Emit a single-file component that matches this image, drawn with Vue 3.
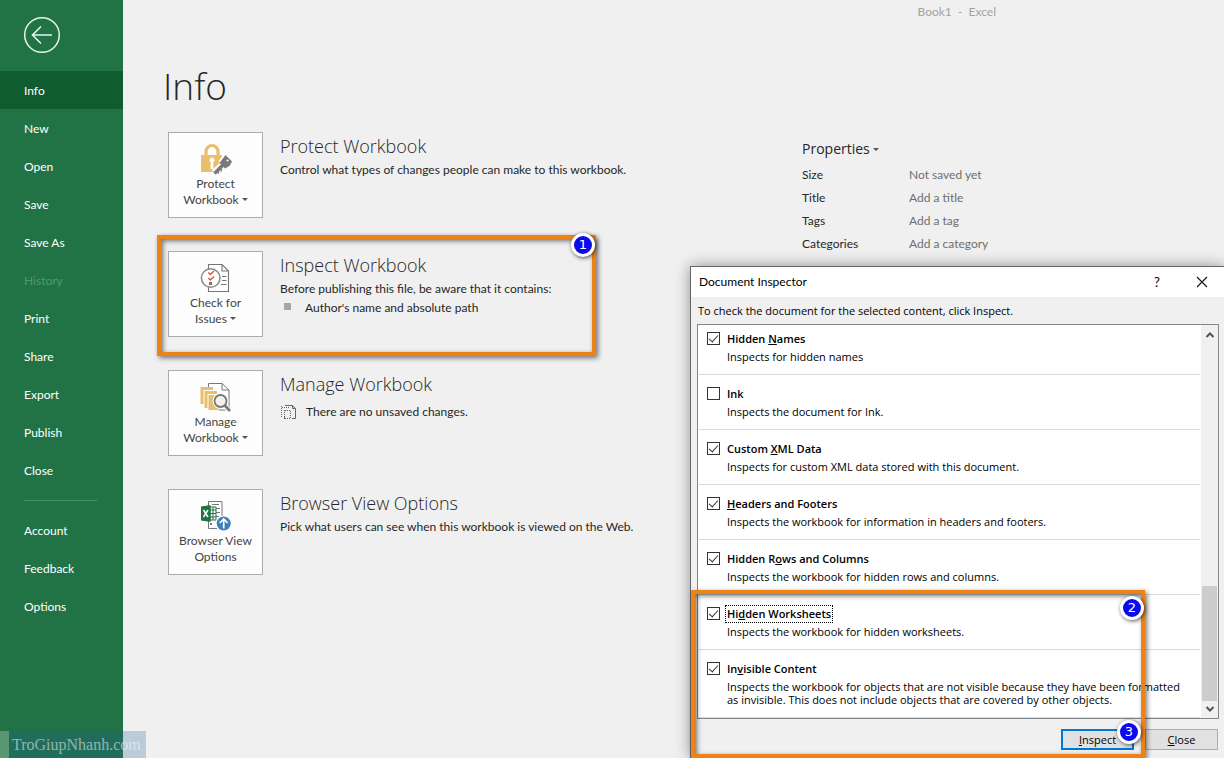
<script setup>
import { ref } from 'vue'

const mainNav = [
  { label: 'Info', active: true },
  { label: 'New' },
  { label: 'Open' },
  { label: 'Save' },
  { label: 'Save As' },
  { label: 'History', disabled: true },
  { label: 'Print' },
  { label: 'Share' },
  { label: 'Export' },
  { label: 'Publish' },
  { label: 'Close' },
]
const footNav = ['Account', 'Feedback', 'Options']

const sections = [
  { id: 'protect', lines: ['Protect', 'Workbook'], menu: true, title: 'Protect Workbook', text: 'Control what types of changes people can make to this workbook.' },
  { id: 'inspect', lines: ['Check for', 'Issues'], menu: true, title: 'Inspect Workbook', text: 'Before publishing this file, be aware that it contains:', bullet: "Author's name and absolute path" },
  { id: 'manage', lines: ['Manage', 'Workbook'], menu: true, title: 'Manage Workbook', note: 'There are no unsaved changes.' },
  { id: 'browser', lines: ['Browser View', 'Options'], menu: false, title: 'Browser View Options', text: 'Pick what users can see when this workbook is viewed on the Web.' },
]

const properties = [
  ['Size', 'Not saved yet'],
  ['Title', 'Add a title'],
  ['Tags', 'Add a tag'],
  ['Categories', 'Add a category'],
]

const checks = ref([
  { pre: 'Hidden ', key: 'N', post: 'ames', on: true, text: ['Inspects for hidden names'] },
  { pre: '', key: '', post: 'Ink', on: false, text: ['Inspects the document for Ink.'] },
  { pre: 'Custom ', key: 'X', post: 'ML Data', on: true, text: ['Inspects for custom XML data stored with this document.'] },
  { pre: '', key: 'H', post: 'eaders and Footers', on: true, text: ['Inspects the workbook for information in headers and footers.'] },
  { pre: 'Hidden R', key: 'o', post: 'ws and Columns', on: true, text: ['Inspects the workbook for hidden rows and columns.'] },
  { pre: 'Hi', key: 'd', post: 'den Worksheets', on: true, focus: true, text: ['Inspects the workbook for hidden worksheets.'] },
  { pre: 'In', key: 'v', post: 'isible Content', on: true, text: ['Inspects the workbook for objects that are not visible because they have been formatted', 'as invisible. This does not include objects that are covered by other objects.'] },
])
</script>

<template>
  <div class="app">
    <aside class="side">
      <button class="back" aria-label="Back">
        <svg width="38" height="38" viewBox="0 0 38 38" fill="none" stroke="#e4f5ea" stroke-width="1.5">
          <circle cx="19" cy="19" r="17.3" />
          <path d="M29 19H10M18 10.5 9.5 19l8.500 8.500" stroke-width="1.6" />
        </svg>
      </button>
      <nav>
        <a v-for="n in mainNav" :key="n.label" href="#" class="nav" :class="{ active: n.active, disabled: n.disabled }">{{ n.label }}</a>
        <hr class="rule" />
        <a v-for="n in footNav" :key="n" href="#" class="nav">{{ n }}</a>
      </nav>
    </aside>

    <main class="main">
      <header class="titlebar">Book1&nbsp; -&nbsp; Excel</header>
      <h1>Info</h1>
      <div class="columns">
        <div class="sections">
          <section v-for="s in sections" :key="s.id" class="section">
            <button class="tile">
              <svg v-if="s.id === 'protect'" width="32" height="32" viewBox="0 0 32 32">
                <path d="M6 13V8.500a6 6 0 0 1 12 0V13" fill="none" stroke="#e8bf6c" stroke-width="3.200" />
                <rect x="1" y="12" width="21" height="17" fill="#e8bf6c" />
                <path d="M12 14.500a2.600 2.600 0 0 1 1.300 4.800V26h-2.600v-6.700a2.600 2.600 0 0 1 1.300-4.800z" fill="#fff" />
                <path d="M14 29.500 23 21" stroke="#fff" stroke-width="6" />
                <path d="M18.500 18 24.500 10.500l8 8-6 7z" fill="#fff" />
                <path d="M25.500 12 32 18.500 29.500 23l-4.500 2.500-5.500-5.500z" fill="#797979" />
                <path d="M14.500 30.500 23.500 21.500" stroke="#797979" stroke-width="3.600" />
                <path d="m17 28.500 2 2M20 25.500l2 2" stroke="#797979" stroke-width="1.500" />
                <circle cx="27.500" cy="17.500" r="1.100" fill="#fff" />
              </svg>
              <svg v-else-if="s.id === 'inspect'" width="32" height="32" viewBox="0 0 32 32" fill="none" stroke="#777" stroke-width="1.100">
                <path d="M8.500 8V2.500H22L28.500 9v20.500h-20V24" />
                <path d="M22 2.500V9h6.500" />
                <path d="M22 14.500h4.500M22 18.500h4.500M21 22.500h5.500" />
                <circle cx="10.700" cy="16" r="9.300" fill="#fff" stroke="#8a8a8a" stroke-width="1.500" />
                <path d="m8.300 10.500 2 2 3.700-3.500M8.300 16l2 2 3.700-3.500" stroke="#d8593a" stroke-width="1.500" />
                <rect x="9.500" y="20.500" width="2" height="2" />
              </svg>
              <svg v-else-if="s.id === 'manage'" width="32" height="32" viewBox="0 0 32 32">
                <path d="M8.500 6V2.500H22L29 9v20H19" fill="#fff" stroke="#777" />
                <path d="M22 2.500V9h7" fill="none" stroke="#777" />
                <path d="M.5 6H13v3H3.500v14h-3zM4.500 10H17v3H7.500v14h-3z" fill="#e8bf6c" />
                <rect x="8.500" y="14" width="12" height="15" fill="#e8bf6c" />
                <circle cx="20.500" cy="20" r="8" fill="#fff" />
                <path d="m25 24.500 5 6" stroke="#fff" stroke-width="5" />
                <circle cx="20.500" cy="20" r="6" fill="#f5f2ec" stroke="#777" stroke-width="1.800" />
                <path d="m24.800 24.500 5.200 5.500" stroke="#777" stroke-width="2.600" />
              </svg>
              <svg v-else width="32" height="32" viewBox="0 0 32 32" fill="none">
                <path d="M8.500 6V1.500h13.500V17M8.500 21v7.500H17" stroke="#777" />
                <path d="M12 4.500h7M16 8.500h4M16 12.500h4M16 16.500h3" stroke="#777" />
                <path d="M11 25v-2" stroke="#777" stroke-width="2" />
                <path d="M10 7h6v13h-6z" fill="#fff" stroke="#217346" />
                <path d="M10 10h6M10 13.500h6M10 17h6M13 7v13" stroke="#217346" />
                <path d="M1 6.500 10.500 5v17L1 20.500z" fill="#217346" />
                <path d="m3.500 10 4.500 7M8 10l-4.500 7" stroke="#fff" stroke-width="1.500" />
                <circle cx="23.700" cy="23.500" r="8" fill="#fff" />
                <circle cx="23.700" cy="23.500" r="7" fill="#3f7fbd" />
                <path d="M23.700 28.500v-9M19.700 23l4-4 4 4" stroke="#fff" stroke-width="1.700" />
              </svg>
              <span>{{ s.lines[0] }}</span>
              <span>{{ s.lines[1] }}<i v-if="s.menu" class="caret"></i></span>
            </button>
            <div class="detail">
              <h2>{{ s.title }}</h2>
              <p v-if="s.text">{{ s.text }}</p>
              <ul v-if="s.bullet"><li>{{ s.bullet }}</li></ul>
              <p v-if="s.note" class="note">
                <svg width="16" height="16" viewBox="0 0 16 16" fill="none" stroke="#666">
                  <path d="M5 1.500h7.500l3 3v10H12M12.500 1.500v3h3" />
                  <path d="M1.500 2v11M2 3.500h8M4 13.500h1M4.500 6v9M5 6.500h6M10.500 7v8M5 14.500h6" stroke-dasharray="1 1" />
                </svg>
                {{ s.note }}
              </p>
            </div>
            <div v-if="s.id === 'inspect'" class="mark mark-one"><b class="pin">1</b></div>
          </section>
        </div>

        <div class="props">
          <button class="props-head">Properties<i class="caret"></i></button>
          <dl>
            <template v-for="p in properties" :key="p[0]">
              <dt>{{ p[0] }}</dt>
              <dd>{{ p[1] }}</dd>
            </template>
          </dl>
        </div>
      </div>
    </main>

    <div class="dialog" role="dialog" aria-labelledby="dlg-title">
      <div class="dlg-bar">
        <span id="dlg-title">Document Inspector</span>
        <button class="help" aria-label="Help">?</button>
        <button class="close" aria-label="Close window">
          <svg width="12" height="12" viewBox="0 0 12 12" stroke="#111" stroke-width="1.100"><path d="m1 1 10 10M11 1 1 11" /></svg>
        </button>
      </div>
      <p class="hint">To check the document for the selected content, click Inspect.</p>
      <div class="list">
        <div class="rows">
          <div v-for="(c, i) in checks" :key="i" class="row">
            <input :id="'check-' + i" v-model="c.on" type="checkbox" />
            <div>
              <label :for="'check-' + i" :class="{ focus: c.focus }">{{ c.pre }}<u>{{ c.key }}</u>{{ c.post }}</label>
              <p><template v-for="(t, j) in c.text" :key="j"><br v-if="j" />{{ t }}</template></p>
            </div>
          </div>
        </div>
        <div class="scroll">
          <svg width="10" height="8" viewBox="0 0 10 8" fill="none" stroke="#555" stroke-width="2"><path d="m1.500 6 3.500-3.500 3.500 3.500" /></svg>
          <div class="thumb"></div>
          <svg width="10" height="8" viewBox="0 0 10 8" fill="none" stroke="#555" stroke-width="2"><path d="m1.500 2 3.500 3.500 3.500-3.500" /></svg>
        </div>
      </div>
      <div class="actions">
        <button class="btn primary"><u>I</u>nspect</button>
        <button class="btn"><u>C</u>lose</button>
      </div>
      <div class="mark mark-two"><b class="pin">2</b><b class="pin low">3</b></div>
    </div>

    <div class="watermark">TroGiupNhanh.com</div>
  </div>
</template>

<style>
body { margin: 0; background: #f0f0f0; }
</style>

<style scoped>
.app {
  position: relative;
  display: flex;
  min-height: 100vh;
  overflow: hidden;
  background: #f0f0f0;
  color: #262626;
  font: 12px/16px Lato, "Open Sans", sans-serif;
}
button { font: inherit; color: inherit; padding: 0; border: 0; background: none; }
p, h1, h2, dl, dd, ul { margin: 0; padding: 0; }

.side { flex: 0 0 123px; background: #217346; }
.back { display: block; margin: 16px 0 17px 23px; height: 38px; }
.nav { display: block; padding: 2px 0 0 24px; line-height: 36px; color: #fff; text-decoration: none; }
.nav.active { background: #0f5c2f; }
.nav.disabled { color: #4d9b70; }
.rule { margin: 11px 26px 10px 24px; border: 0; border-top: 1px solid #4b9069; }

.main { flex: 1; min-width: 0; }
.titlebar { padding: 4px 228px 0 0; text-align: right; color: #a3a3a3; }
h1 { margin: 38px 0 0 40px; font: 300 37px/56px "Open Sans", sans-serif; }
.columns { display: flex; padding: 18px 0 0 45px; }
.sections { flex: 0 0 634px; display: grid; gap: 33px; align-content: start; }
.section { position: relative; display: flex; }
.tile {
  display: flex;
  flex-direction: column;
  align-items: center;
  flex: 0 0 95px;
  box-sizing: border-box;
  height: 86px;
  padding-top: 10px;
  border: 1px solid #ababab;
  background: #fdfdfd;
  color: #444;
}
.tile svg { margin-bottom: 1px; }
.caret { display: inline-block; margin-left: 3px; border: 3px solid transparent; border-top-color: #555; border-bottom: 0; vertical-align: 3px; }
.detail { padding: 1px 0 0 17px; }
h2 { font: 300 18px/26px "Open Sans", sans-serif; margin-bottom: 3px; }
ul { list-style: none; margin-top: 3px; }
li { display: flex; }
li::before { content: ""; width: 7px; height: 7px; margin: 3px 14px 0 4px; background: #a6a6a6; }
.note { display: flex; gap: 10px; margin-top: 7px; }

.props { padding-top: 7px; }
.props-head { display: block; font: 14px/20px "Open Sans", sans-serif; }
dl { display: grid; grid-template-columns: 107px auto; margin-top: 4px; line-height: 23px; }
dd { color: #6e6e6e; }

.mark { position: absolute; border: 4px solid #ee8315; box-shadow: 2px 2px 5px #0008, inset 2px 2px 5px #0008; pointer-events: none; }
.mark-one { left: -11px; top: -16px; width: 431px; height: 113px; }
.mark-two { left: 0; right: 79px; top: 323px; bottom: 0; }
.pin {
  position: absolute;
  right: -3px;
  top: -6px;
  width: 18px;
  height: 18px;
  border: 3px solid #fff;
  border-radius: 50%;
  background: #0a0af0;
  box-shadow: 1px 1px 4px #000a;
  color: #fff;
  font: 13px/18px "DejaVu Sans", sans-serif;
  text-align: center;
}
.mark-two .pin { right: -3px; top: 2px; }
.mark-two .low { right: 0; top: auto; bottom: 10px; }

.dialog {
  position: absolute;
  left: 690px;
  right: 0;
  top: 266px;
  border: 1px solid #666;
  border-width: 1px 0 0 1px;
  background: #f0f0f0;
  color: #000;
  box-shadow: 0 0 14px #0006;
  font-family: "Open Sans", sans-serif;
  font-size: 11px;
}
.dlg-bar { display: flex; align-items: center; height: 30px; padding: 0 16px 0 8px; background: #fff; font: 12px/16px Lato, sans-serif; }
.help { margin-left: auto; width: 20px; font-size: 13px; }
.close { display: flex; margin-left: 29px; }
.hint { padding: 6px 7px 5px; }
.list { display: flex; margin: 0 5px 0 6px; border: 1px solid #828790; background: #fff; }
.rows { flex: 1; min-width: 0; padding: 0 1px; }
.row { display: flex; padding: 10px 0 11px 8px; border-bottom: 1px solid #dcdcdc; }
.row:first-child { padding-top: 5px; }
.row p { margin-top: 2px; line-height: 13px; white-space: nowrap; }
input[type="checkbox"] { appearance: none; box-sizing: border-box; flex: none; width: 13px; height: 13px; margin: 2px 7px 0 0; border: 1px solid #333; background: #fff; }
input:checked::before { content: ""; display: block; box-sizing: border-box; width: 9px; height: 5px; margin: 2px 0 0 1px; border: solid #333; border-width: 0 0 1px 1px; transform: rotate(-48deg); }
label { display: block; width: max-content; line-height: 18px; font-weight: 600; }
label.focus { height: 16px; margin: 0 -2px; padding: 0 1px; border: 1px dotted #000; line-height: 16px; }
.scroll { display: flex; flex-direction: column; align-items: center; flex: 0 0 17px; background: #f0f0f0; padding: 6px 0 5px; box-sizing: border-box; }
.thumb { width: 15px; height: 115px; margin: auto 0 4px; background: #cdcdcd; }
.actions { display: flex; justify-content: flex-end; gap: 11px; padding: 10px 6px 8px 0; }
.btn { box-sizing: border-box; width: 73px; height: 21px; border: 1px solid #adadad; background: #e1e1e1; }
.primary { border: 2px solid #0078d7; }

.watermark {
  position: absolute;
  left: 0;
  bottom: 0;
  padding-left: 3px;
  border-left: 9px solid #ffffff40;
  width: 134px;
  background: #1a5a9640;
  background-clip: padding-box;
  color: #ffffff80;
  font: 16px/27px "Liberation Serif", serif;
}
</style>
